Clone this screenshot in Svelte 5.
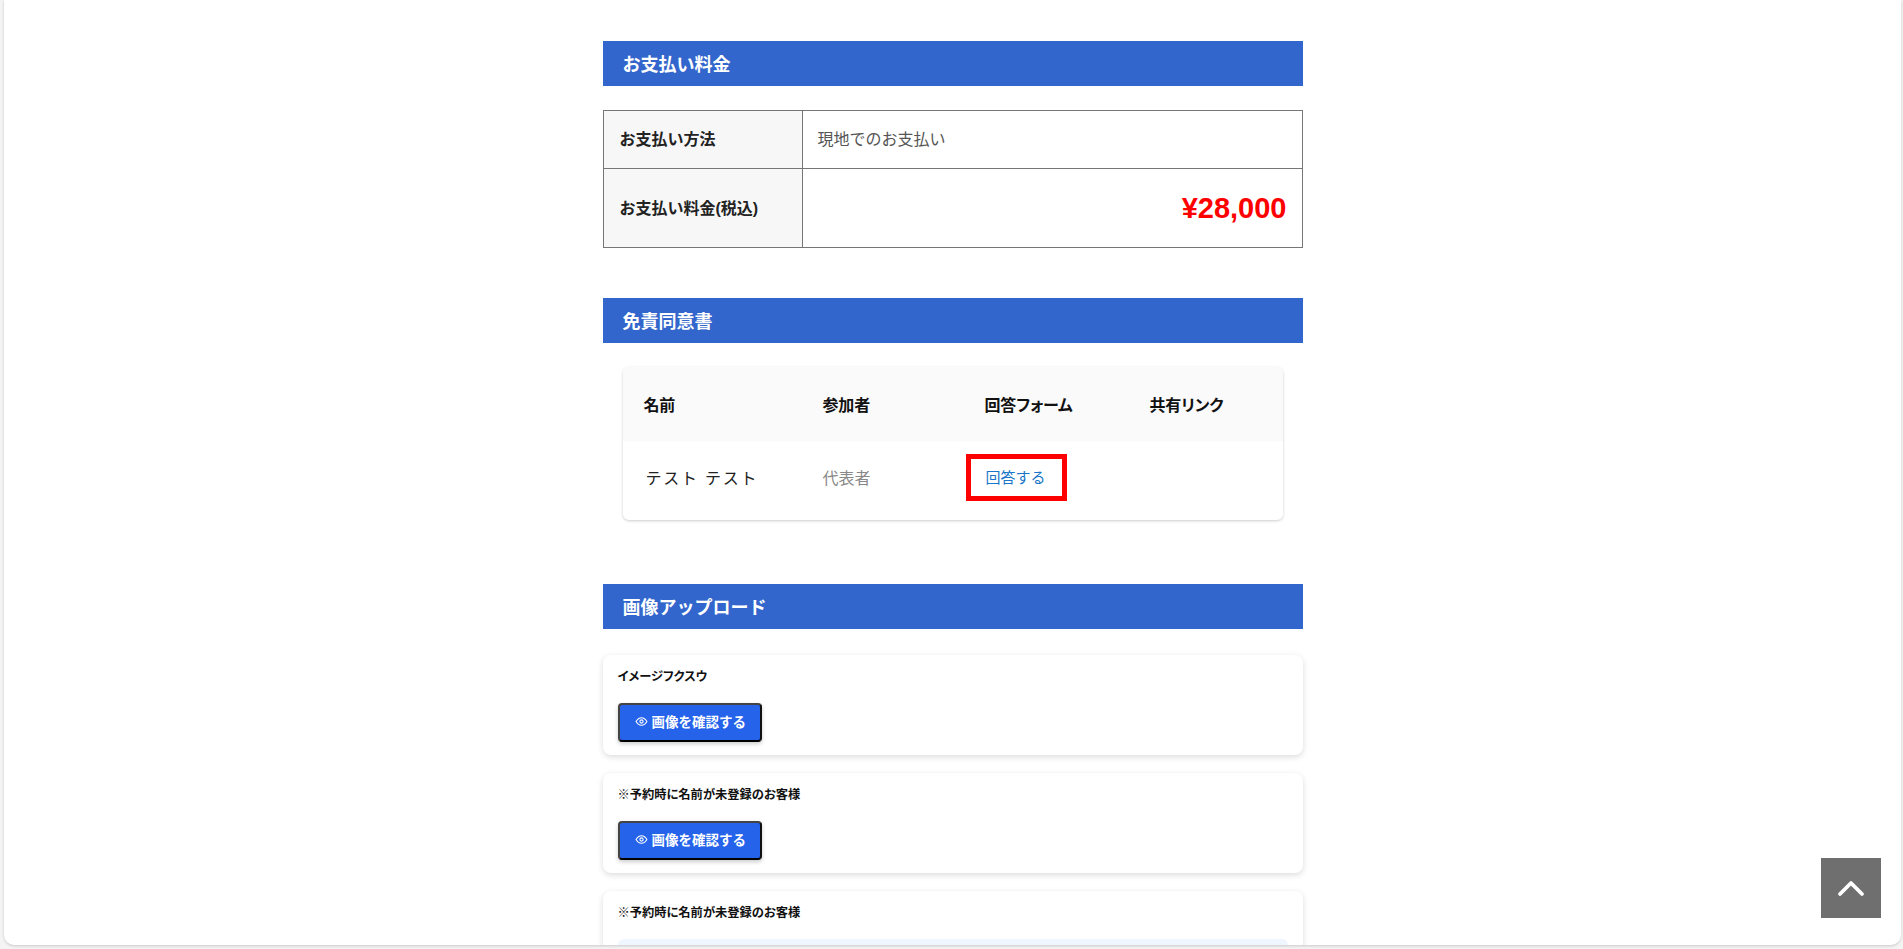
<script>
	const rows = [
		{ title: 'イメージフクスウ', upload: false },
		{ title: '※予約時に名前が未登録のお客様', upload: false },
		{ title: '※予約時に名前が未登録のお客様', upload: true }
	];
</script>

<div class="page">
	<main class="sheet">
		<div class="content">
			<h2 class="bar">お支払い料金</h2>
			<table class="pay">
				<tbody>
					<tr class="method">
						<th>お支払い方法</th>
						<td>現地でのお支払い</td>
					</tr>
					<tr class="total">
						<th>お支払い料金(税込)</th>
						<td class="price">¥28,000</td>
					</tr>
				</tbody>
			</table>

			<h2 class="bar">免責同意書</h2>
			<div class="waiver">
				<div class="w-row w-head">
					<span>名前</span>
					<span>参加者</span>
					<span>回答フォーム</span>
					<span>共有リンク</span>
				</div>
				<div class="w-row w-body">
					<span class="who">テスト テスト</span>
					<span class="role">代表者</span>
					<span class="answer"><span class="answer-link">回答する</span></span>
					<span></span>
				</div>
			</div>

			<h2 class="bar">画像アップロード</h2>
			<div class="uploads">
				{#each rows as row}
					<section class="up-card">
						<p class="up-title">{row.title}</p>
						{#if row.upload}
							<div class="dropzone"></div>
						{:else}
							<button class="view">
								<svg width="13" height="13" viewBox="0 0 24 24" fill="none" stroke="currentColor" stroke-width="2">
									<path d="M2 12s4-7 10-7 10 7 10 7-4 7-10 7-10-7-10-7z" />
									<circle cx="12" cy="12" r="3" />
								</svg>
								画像を確認する
							</button>
						{/if}
					</section>
				{/each}
			</div>
		</div>
	</main>

	<button class="to-top" aria-label="ページ上部へ">
		<svg width="30" height="30" viewBox="0 0 30 30" fill="none" stroke="#fff" stroke-width="3.8" stroke-linecap="round" stroke-linejoin="round">
			<path d="M4 21 15 10 26 21" />
		</svg>
	</button>
</div>

<style>
	:global(body) {
		background: #f4f4f4;
		font-family: "Liberation Sans", "Noto Sans CJK JP", sans-serif;
		overflow: hidden;
	}

	.page {
		height: 949px;
		padding: 0 2px 4px 4px;
		box-sizing: border-box;
	}

	.sheet {
		height: 945px;
		background: #fff;
		border-radius: 0 0 10px 10px;
		box-shadow: 0 1px 3px rgba(0, 0, 0, 0.18);
		overflow: hidden;
	}

	.content {
		width: 700px;
		margin: 0 auto;
		padding-top: 41px;
	}

	.bar {
		margin: 0;
		height: 45px;
		box-sizing: border-box;
		padding: 4px 0 0 20px;
		line-height: 41px;
		background: #3366cc;
		color: #fff;
		font-size: 18px;
		font-weight: 700;
	}

	.pay {
		width: 100%;
		margin: 24px 0 50px;
		border-collapse: collapse;
		table-layout: fixed;
		font-size: 16px;
	}

	.pay th,
	.pay td {
		border: 1px solid #767676;
		padding: 0 15px;
	}

	.pay th {
		width: 167px;
		padding-left: 16px;
		background: #f7f7f7;
		color: #222;
		font-size: 16px;
		font-weight: 700;
		text-align: left;
	}

	.pay td {
		color: #555;
	}

	.method {
		height: 58px;
	}

	.method th,
	.method td {
		padding-bottom: 4px;
	}

	.total {
		height: 79px;
	}

	.total th {
		padding-bottom: 2px;
	}

	.pay .price {
		color: #ff0000;
		font-size: 29px;
		font-weight: 700;
		text-align: right;
	}

	.waiver {
		margin: 24px 20px 64px;
		border-radius: 6px;
		box-shadow: 0 1px 3px rgba(0, 0, 0, 0.2);
		font-size: 16px;
		overflow: hidden;
	}

	.w-row {
		display: grid;
		grid-template-columns: 179px 162px 165px 1fr;
		align-items: center;
		padding-left: 21px;
	}

	.w-head {
		height: 74px;
		background: #fafafa;
		color: #111;
		font-weight: 700;
		font-feature-settings: "palt";
		letter-spacing: -0.01em;
	}

	.w-body {
		height: 79px;
		padding-bottom: 7px;
		box-sizing: border-box;
	}

	.who {
		padding-left: 2px;
		color: #222;
		letter-spacing: 0.11em;
	}

	.role {
		color: #888;
	}

	.answer-link {
		display: inline-block;
		margin-left: -19px;
		padding: 6px 16px 5px 15px;
		border: 5px solid #ff0000;
		color: #1976c8;
		font-size: 15px;
		line-height: 26px;
	}

	.uploads {
		display: flex;
		flex-direction: column;
		gap: 18px;
		margin-top: 26px;
	}

	.up-card {
		padding: 14px 15px 13px;
		border-radius: 8px;
		background: #fff;
		box-shadow: 0 2px 6px rgba(0, 0, 0, 0.14);
	}

	.up-title {
		margin: 0 0 18px;
		color: #111;
		font-size: 12.25px;
		font-weight: 700;
		line-height: 16px;
		font-feature-settings: "palt";
	}

	.view {
		display: flex;
		align-items: center;
		gap: 4px;
		width: 144px;
		height: 39px;
		padding: 0 0 3px 15px;
		border: 2px solid;
		border-color: #444 #111 #000 #444;
		border-radius: 4px;
		background: #2563eb;
		color: #fff;
		font-family: inherit;
		font-size: 13.5px;
		font-weight: 700;
		white-space: nowrap;
		box-shadow: 0 2px 4px rgba(0, 0, 0, 0.2);
	}

	.view svg {
		flex-shrink: 0;
	}

	.dropzone {
		height: 120px;
		border-radius: 6px;
		background: #eff6ff;
	}

	.to-top {
		position: fixed;
		left: 1821px;
		top: 858px;
		display: flex;
		align-items: center;
		justify-content: center;
		width: 60px;
		height: 60px;
		padding: 0;
		border: none;
		background: #6f6f6f;
	}
</style>
